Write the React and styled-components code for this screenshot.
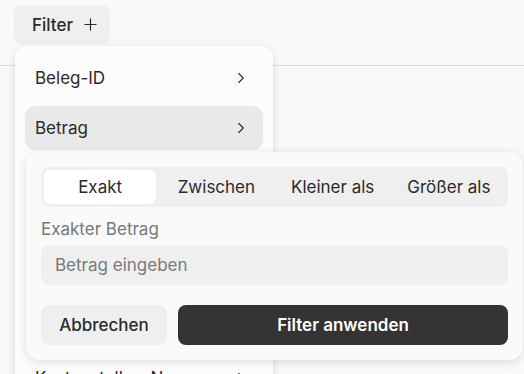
import styled, { createGlobalStyle } from 'styled-components';
import { ChevronRight, Plus } from 'lucide-react';

const GlobalStyle = createGlobalStyle`
  body {
    margin: 0;
    font-family: Inter, "Noto Sans", sans-serif;
    background: #f9f9f9;
    color: #2a2a2a;
  }
`;

const Page = styled.div`
  position: relative;
  height: 100vh;
  overflow: hidden;
`;

const TopBar = styled.div`
  height: 66px;
  box-sizing: border-box;
  padding: 5px 14px;
  background: #f8f9fa;
  border-bottom: 1px solid #d9dcdf;
`;

const FilterButton = styled.button`
  display: flex;
  align-items: center;
  gap: 8px;
  height: 39px;
  padding: 0 10px 0 18px;
  border: none;
  border-radius: 8px;
  background: #efefef;
  font-family: inherit;
  font-size: 17px;
  font-weight: 500;
  color: #2a2a2a;
`;

const Menu = styled.div`
  position: absolute;
  top: 46px;
  left: 15px;
  width: 258px;
  box-sizing: border-box;
  padding: 10px;
  display: flex;
  flex-direction: column;
  gap: 6px;
  background: #fcfcfc;
  border-radius: 12px;
  box-shadow: 0 2px 10px rgba(0, 0, 0, 0.12);
`;

const MenuItem = styled.div`
  display: flex;
  align-items: center;
  justify-content: space-between;
  height: 44px;
  flex-shrink: 0;
  padding: 0 13px 0 10px;
  border-radius: 10px;
  font-size: 17px;
  background: ${(p) => (p.$active ? '#e9e9e9' : 'transparent')};
`;

const Panel = styled.div`
  position: absolute;
  top: 152px;
  left: 26px;
  width: 497px;
  box-sizing: border-box;
  padding: 15px;
  display: flex;
  flex-direction: column;
  background: #fafafa;
  border-radius: 14px;
  box-shadow: 0 2px 10px rgba(0, 0, 0, 0.13);
`;

const Tabs = styled.div`
  display: grid;
  grid-template-columns: repeat(4, 1fr);
  gap: 4px;
  height: 40px;
  box-sizing: border-box;
  padding: 3px;
  background: #efefef;
  border-radius: 8px;
`;

const Tab = styled.div`
  display: flex;
  align-items: center;
  justify-content: center;
  border-radius: 6px;
  font-size: 17px;
  color: #2a2a2a;
  background: ${(p) => (p.$active ? '#ffffff' : 'transparent')};
`;

const Label = styled.div`
  margin-top: 11px;
  line-height: 22px;
  font-size: 17px;
  color: #777777;
`;

const Input = styled.input`
  margin-top: 5px;
  height: 40px;
  box-sizing: border-box;
  padding: 0 14px;
  border: none;
  border-radius: 8px;
  background: #efefef;
  font-family: inherit;
  font-size: 17px;
  color: #2a2a2a;
  outline: none;
  &::placeholder {
    color: #7a7a7a;
  }
`;

const Actions = styled.div`
  margin-top: 20px;
  display: flex;
  gap: 11px;
`;

const Button = styled.button`
  height: 40px;
  border: none;
  border-radius: 8px;
  font-family: inherit;
  font-size: 17px;
  font-weight: ${(p) => (p.$primary ? 600 : 500)};
  color: ${(p) => (p.$primary ? '#ffffff' : '#2a2a2a')};
  background: ${(p) => (p.$primary ? '#333333' : '#efefef')};
  flex: ${(p) => (p.$primary ? 1 : '0 0 126px')};
`;

const fields = [
  'Beleg-ID',
  'Betrag',
  'Datum',
  'Lieferant',
  'Status',
  'Kategorie',
  'Kostenstellen-Nummer',
];

const modes = ['Exakt', 'Zwischen', 'Kleiner als', 'Größer als'];

function App() {
  return (
    <>
      <GlobalStyle />
      <Page>
        <TopBar>
          <FilterButton>
            Filter
            <Plus size={19} strokeWidth={1.5} />
          </FilterButton>
        </TopBar>
        <Menu>
          {fields.map((f) => (
            <MenuItem key={f} $active={f === 'Betrag'}>
              {f}
              <ChevronRight size={18} strokeWidth={1.5} />
            </MenuItem>
          ))}
        </Menu>
        <Panel>
          <Tabs>
            {modes.map((m) => (
              <Tab key={m} $active={m === 'Exakt'}>
                {m}
              </Tab>
            ))}
          </Tabs>
          <Label>Exakter Betrag</Label>
          <Input placeholder="Betrag eingeben" />
          <Actions>
            <Button>Abbrechen</Button>
            <Button $primary>Filter anwenden</Button>
          </Actions>
        </Panel>
      </Page>
    </>
  );
}

export default App;
